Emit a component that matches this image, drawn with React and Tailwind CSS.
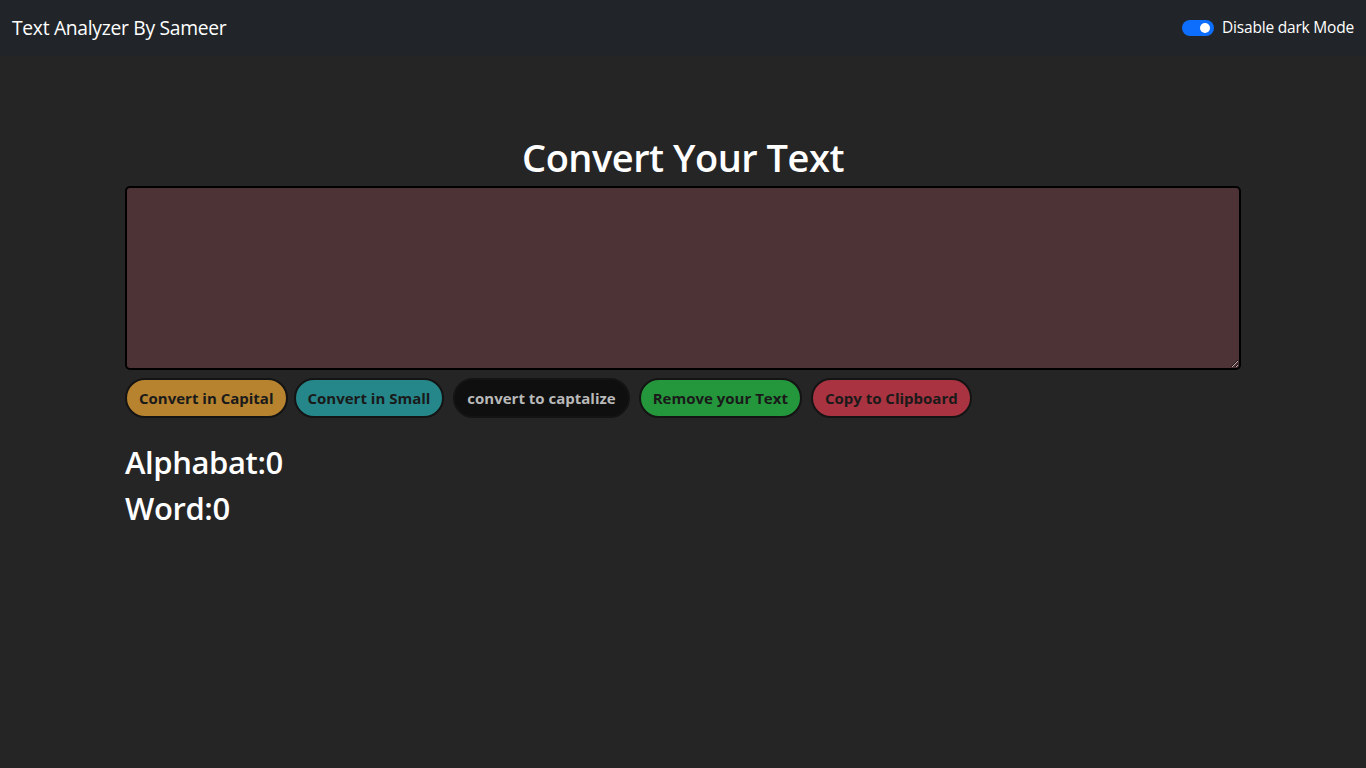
import React from 'react';

export default function App() {
  const btn = 'h-[40px] px-[12px] rounded-full border-2 border-[#141414] text-[15px] font-bold leading-none';

  return (
    <div className="min-h-[768px] bg-[#252525] text-white font-['Open_Sans','Noto_Sans',sans-serif]">
      <nav className="h-[56px] bg-[#212529] flex items-center justify-between pl-[12px] pr-[12px]">
        <span className="text-[19.3px] tracking-[-0.3px] text-white">Text Analyzer By Sameer</span>
        <label className="flex items-center gap-[8px] text-[15.5px] tracking-[-0.2px]">
          <span className="relative w-[32px] h-[16px] rounded-full bg-[#0d6efd]">
            <span className="absolute right-[4px] top-[3px] w-[10px] h-[10px] rounded-full bg-white" />
          </span>
          Disable dark Mode
        </label>
      </nav>

      <div className="w-[1116px] mx-auto pt-[73px]">
        <h1 className="text-center text-[38px] font-semibold tracking-[-0.5px] leading-[57px]">Convert Your Text</h1>
        <textarea
          className="block w-full h-[184px] bg-[#4d3236] border-2 border-black rounded-[5px] outline-none"
          defaultValue=""
        />
        <div className="flex flex-wrap gap-[6px] mt-[8px]">
          <button className={`${btn} bg-[#b7832f] text-[#1a1a1a]`}>Convert in Capital</button>
          <button className={`${btn} bg-[#25878a] text-[#1a1a1a]`}>Convert in Small</button>
          <button className={`${btn} bg-[#0f0f0f] border-[#0f0f0f] text-[#b9b9b9] ml-[3px]`}>convert to captalize</button>
          <button className={`${btn} bg-[#24963b] text-[#1a1a1a] ml-[3px]`}>Remove your Text</button>
          <button className={`${btn} bg-[#a93340] text-[#1a1a1a] ml-[3px]`}>Copy to Clipboard</button>
        </div>
        <div className="mt-[21px] text-[31px] font-semibold tracking-[-0.4px] leading-[46px]">
          <div>Alphabat:0</div>
          <div>Word:0</div>
        </div>
      </div>
    </div>
  );
}
